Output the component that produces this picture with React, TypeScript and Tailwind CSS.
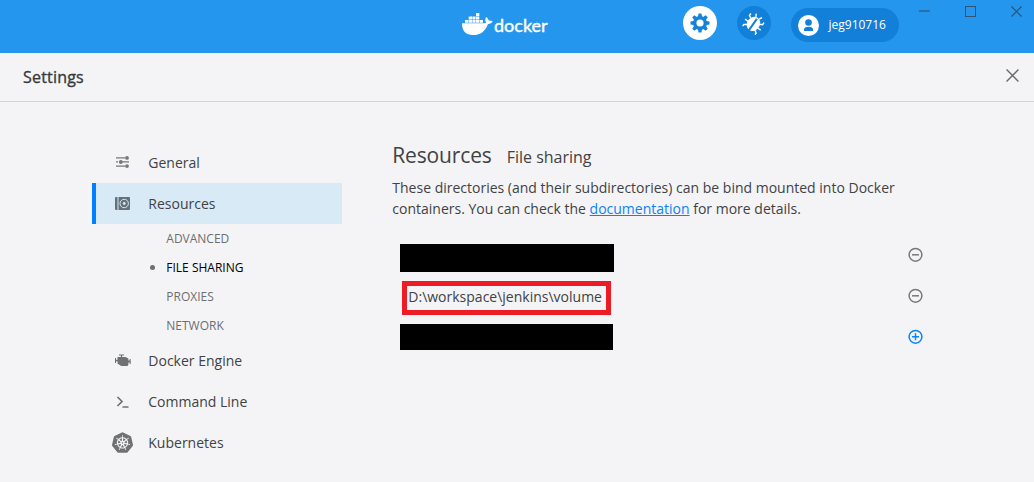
import type { ReactNode } from 'react'
import { SiKubernetes } from 'react-icons/si'

const resourcePages = ['ADVANCED', 'FILE SHARING', 'PROXIES', 'NETWORK']
const gearAngles = [0, 45, 90, 135]

function DockerLogo() {
  return (
    <div className="flex h-6 w-[88px] items-start text-white">
      <svg width="31" height="24" viewBox="0 0 31 24" fill="currentColor" className="shrink-0">
        <path d="M0 11.2h21.6c1.4 0 2.2-.3 2.5-.7-1-1.500-1.200-3.900.1-5.500 1.500 1 2.200 2.100 2.400 3.500 1.400-.2 2.900 0 4.100.8-.8 1.800-2.400 2.600-4.700 2.600C23.400 18.900 18.700 23 11.200 23 4 23 0 19.200 0 11.200z" />
        <path d="M3 8h3.300v2.700H3zM6.700 8H10v2.700H6.700zM10.400 8h3.200v2.700h-3.200zM14 8h3.300v2.700H14zM17.700 8H21v2.700h-3.300zM6.700 4.500H10v3H6.700zM10.400 4.500h3.200v3h-3.200zM14 4.500h3.300v3H14zM14 1h3.300v3H14z" />
      </svg>
      <span className="ml-px font-[Lato] text-[18px] leading-[26px] [-webkit-text-stroke:0.4px_white]">
        docker
      </span>
    </div>
  )
}

function GearIcon() {
  return (
    <svg width="20" height="20" viewBox="-10 -10 20 20">
      <g fill="#1683d9">
        <circle r="7" />
        {gearAngles.map((angle) => (
          <path key={angle} d="M-2-6.500l.5-3h3l.5 3v13l-.5 3h-3l-.5-3z" transform={`rotate(${angle})`} />
        ))}
      </g>
      <circle r="3.600" fill="white" />
    </svg>
  )
}

function BugIcon() {
  return (
    <svg width="24" height="24" viewBox="-12 -12 24 24">
      <g transform="rotate(35)">
        <path
          d="M-5-2l-3-1.500v-2.500M-5.500 2h-4M-4.500 5l-3 2v2M5-2l3-1.500v-2.500M5.500 2h4M4.500 5l3 2v2M-2-6l-1.500-3M2-6l1.500-3"
          fill="none"
          stroke="white"
          strokeWidth="1.400"
        />
        <ellipse cy="1" rx="6.400" ry="7.500" fill="white" />
        <path d="M0-5v15" stroke="#1280d8" strokeWidth="2" />
      </g>
    </svg>
  )
}

function UserIcon() {
  return (
    <svg width="21" height="21" viewBox="0 0 21 21">
      <circle cx="10.500" cy="10.500" r="10.500" fill="white" />
      <circle cx="10.500" cy="7.500" r="3.300" fill="#1280d8" />
      <path d="M6 16v-1.500c0-1.700 1.500-2.700 4.500-2.700s4.500 1 4.500 2.700V16z" fill="#1280d8" />
    </svg>
  )
}

function SlidersIcon() {
  return (
    <svg width="14" height="12" viewBox="0 0 14 12" fill="#75777a" className="mb-0.5">
      <path d="M0 1.200h9v1.300H0zM0 5.300h2v1.300H0zM3 5.300h10v1.300H3zM0 9.500h9v1.300H0z" />
      <circle cx="11" cy="1.900" r="1.900" />
      <circle cx="4.800" cy="6" r="1.900" />
      <circle cx="11" cy="10.100" r="1.900" />
    </svg>
  )
}

function ResourcesIcon() {
  return (
    <svg width="15" height="13" viewBox="0 0 15 13" className="mb-px">
      <path d="M1 0h1.500v13H1a1 1 0 0 1-1-1V1a1 1 0 0 1 1-1zM3.500 0H14a1 1 0 0 1 1 1v11a1 1 0 0 1-1 1H3.500z" fill="#667078" />
      <circle cx="9.200" cy="6.500" r="4.200" fill="none" stroke="#d8eaf6" strokeWidth="1" />
      <circle cx="9.200" cy="6.500" r="1.400" fill="#d8eaf6" />
    </svg>
  )
}

function EngineIcon() {
  return (
    <svg width="16" height="13" viewBox="0 0 16 13" fill="#707173">
      <path d="M4 .5h5v1H7.100V3h3.300l3 1.500v6L12.500 12H6.200L2.500 9.500V3h3.400V1.500H4z" />
      <path d="M0 4h1v1.800h2v1.400H1V9H0zM13 6.500h1.700V5h1v5h-1V8.500H13z" />
    </svg>
  )
}

function TerminalIcon() {
  return (
    <svg width="14" height="12" viewBox="0 0 14 12" fill="none" stroke="#707173" strokeWidth="1.700">
      <path d="M1.500 1l4.500 4.500L1.500 10M6.500 11h6" />
    </svg>
  )
}

function CloseIcon({ className }: { className: string }) {
  return (
    <svg viewBox="0 0 12 12" fill="none" stroke="currentColor" className={className}>
      <path d="M.5.5l11 11M11.500.5l-11 11" />
    </svg>
  )
}

function RoundButton({ plus }: { plus?: boolean }) {
  return (
    <button className={plus ? 'text-[#0c82fa]' : 'text-[#77787b]'}>
      <svg width="15" height="15" viewBox="0 0 15 15" fill="none" stroke="currentColor" strokeWidth="1.500">
        <circle cx="7.500" cy="7.800" r="6.400" />
        <path d={plus ? 'M4 7.800h7M7.500 4.300v7' : 'M4 7.800h7'} />
      </svg>
    </button>
  )
}

function NavItem({ icon, label, active }: { icon: ReactNode; label: string; active?: boolean }) {
  return (
    <div
      className={
        active
          ? 'flex h-[41px] items-center border-l-4 border-[#0080ff] bg-[#d8eaf6]'
          : 'flex h-[41px] items-center border-l-4 border-transparent'
      }
    >
      <span className="ml-4 flex w-[21px] justify-center">{icon}</span>
      <span className="ml-[15.3px] text-[14px]">{label}</span>
    </div>
  )
}

function FileRow({ children, plus }: { children: ReactNode; plus?: boolean }) {
  return (
    <div className="flex h-[41px] w-[531px] items-center justify-between">
      {children}
      <RoundButton plus={plus} />
    </div>
  )
}

export default function App() {
  return (
    <div className="h-[482px] w-[1034px] overflow-hidden bg-[#f4f4f6] font-['Open_Sans',sans-serif] text-[#414244]">
      <header className="flex h-[53px] items-start bg-[#2496ed]">
        <div className="ml-[462px] mt-3">
          <DockerLogo />
        </div>
        <button className="ml-[133px] mt-1.5 flex size-[34px] items-center justify-center rounded-full bg-white">
          <GearIcon />
        </button>
        <button className="ml-5 mt-1.5 flex size-[34px] items-center justify-center rounded-full bg-[#1280d8]">
          <BugIcon />
        </button>
        <div className="ml-5 mt-2 flex h-[34px] w-[108px] items-center rounded-full bg-[#1280d8] pl-[7px] text-[12px] font-medium text-white">
          <UserIcon />
          <span className="ml-[9.5px]">jeg910716</span>
        </div>
        <div className="ml-5 mt-1.5 flex items-center gap-[35px] text-[#31536f]">
          <span className="mb-px h-0.5 w-[11px] bg-[#2c6ea8]" />
          <span className="size-[11px] border border-[#31536f]" />
          <CloseIcon className="size-[11px] stroke-[1.300]" />
        </div>
      </header>

      <div className="flex h-[49px] items-center justify-between border-b border-[#d4d5d8] pl-[23px] pr-[15px]">
        <h1 className="text-[16px] tracking-[0.2px] text-[#38393b] [-webkit-text-stroke:0.35px_#38393b]">Settings</h1>
        <CloseIcon className="mb-[3px] size-[13px] stroke-[1.300] text-[#666b70]" />
      </div>

      <div className="flex pl-[92px] pt-10">
        <nav className="w-[250px] shrink-0">
          <NavItem icon={<SlidersIcon />} label="General" />
          <NavItem icon={<ResourcesIcon />} label="Resources" active />
          <ul>
            {resourcePages.map((page) => (
              <li key={page} className="flex h-[29px] items-center pl-[58px] text-[12px]">
                {page === 'FILE SHARING' ? (
                  <>
                    <span className="mr-[11.3px] size-[5px] rounded-full bg-[#6d6e70]" />
                    <span className="text-black">{page}</span>
                  </>
                ) : (
                  <span className="ml-[16.3px] text-[#6d6e70]">{page}</span>
                )}
              </li>
            ))}
          </ul>
          <NavItem icon={<EngineIcon />} label="Docker Engine" />
          <NavItem icon={<TerminalIcon />} label="Command Line" />
          <NavItem icon={<SiKubernetes size={21} color="#707173" />} label="Kubernetes" />
        </nav>

        <main className="ml-[50.3px]">
          <div className="-mt-px flex h-9 items-baseline">
            <h2 className="text-[21px] leading-[28px] tracking-[-0.15px]">Resources</h2>
            <h3 className="ml-[15px] text-[16px]">File sharing</h3>
          </div>
          <p className="w-[530px] text-[14px] leading-[21px]">
            These directories (and their subdirectories) can be bind mounted into Docker
            <br />
            containers. You can check the{' '}
            <a className="text-[#0c82fa] underline">documentation</a> for more details.
          </p>
          <div className="-ml-[0.3px] mt-[15px]">
            <FileRow>
              <div className="ml-2 mt-[7px] h-7 w-[214px] bg-black" />
            </FileRow>
            <FileRow>
              <div className="ml-2.5 mt-1 flex h-[34px] w-[209px] items-center border-[5px] border-[#ed1c24] pb-0.5 pl-[1.3px] text-[14px]">
                D:\workspace\jenkins\volume
              </div>
            </FileRow>
            <FileRow plus>
              <div className="ml-2 h-[26px] w-[213px] bg-black" />
            </FileRow>
          </div>
        </main>
      </div>
    </div>
  )
}
